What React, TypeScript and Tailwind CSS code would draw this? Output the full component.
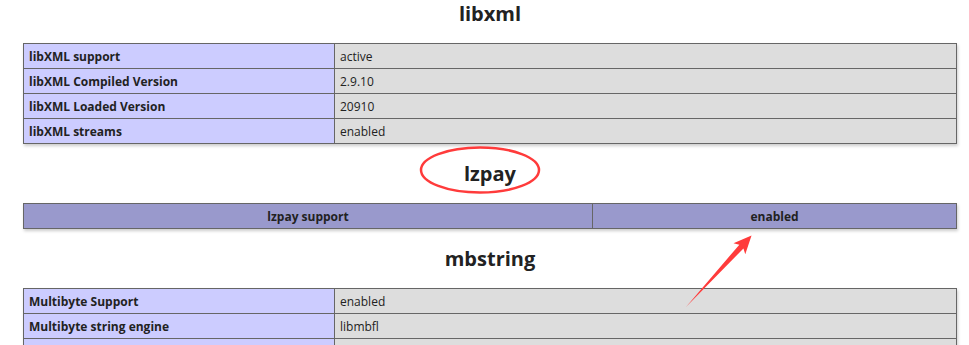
const font = { fontFamily: '"Open Sans", "Noto Sans", Arial, sans-serif' };

type Row = [string, string];

const libxml: Row[] = [
  ["libXML support", "active"],
  ["libXML Compiled Version", "2.9.10"],
  ["libXML Loaded Version", "20910"],
  ["libXML streams", "enabled"],
];

// the last row runs off the bottom of the view, only its top edge shows
const mbstring: Row[] = [
  ["Multibyte Support", "enabled"],
  ["Multibyte string engine", "libmbfl"],
  ["", ""],
];

function Heading({ title }: { title: string }) {
  return (
    <h2 className="h-[27px] text-center text-[20px] font-bold leading-[27px] text-[#222]">
      {title}
    </h2>
  );
}

function InfoTable({ rows }: { rows: Row[] }) {
  return (
    <table className="w-[934px] border-collapse shadow-[1px_2px_3px_#ccc]">
      <tbody>
        {rows.map(([k, v], i) => (
          <tr key={i} className="h-[25px]">
            <td className="w-[311px] border border-[#666] bg-[#ccf] px-[5px] pt-[5px] pb-[3px] text-[12px] font-bold leading-[16px] text-[#222]">
              {k}
            </td>
            <td className="border border-[#666] bg-[#ddd] px-[5px] pt-[5px] pb-[3px] text-[12px] leading-[16px] text-[#222]">
              {v}
            </td>
          </tr>
        ))}
      </tbody>
    </table>
  );
}

export default function App() {
  return (
    <div className="relative h-[345px] w-[969px] overflow-hidden bg-white" style={font}>
      <div className="ml-[23px] flex w-[934px] flex-col gap-4">
        <Heading title="libxml" />
        <InfoTable rows={libxml} />
        <Heading title="lzpay" />
        <table className="w-[934px] border-collapse shadow-[1px_2px_3px_#ccc]">
          <thead>
            <tr>
              <th className="w-[569px] border border-[#666] bg-[#99c] px-[5px] pt-[5px] pb-[3px] text-center text-[12px] font-bold leading-[16px] text-[#222]">
                lzpay support
              </th>
              <th className="border border-[#666] bg-[#99c] px-[5px] pt-[5px] pb-[3px] text-center text-[12px] font-bold leading-[16px] text-[#222]">
                enabled
              </th>
            </tr>
          </thead>
        </table>
        <Heading title="mbstring" />
        <InfoTable rows={mbstring} />
      </div>

      {/* red markup drawn on top */}
      <svg className="pointer-events-none absolute left-0 top-0" width="969" height="345">
        <ellipse cx="480" cy="170" rx="59" ry="22.5" fill="none" stroke="#ff3b3b" strokeWidth="2.5" />
        <g transform="translate(686 307) rotate(-47.5)">
          <polygon points="0,0 82,-2.8 79,-8 97,0 79,8 82,2.8" fill="#ff3b3b" />
        </g>
      </svg>
    </div>
  );
}
